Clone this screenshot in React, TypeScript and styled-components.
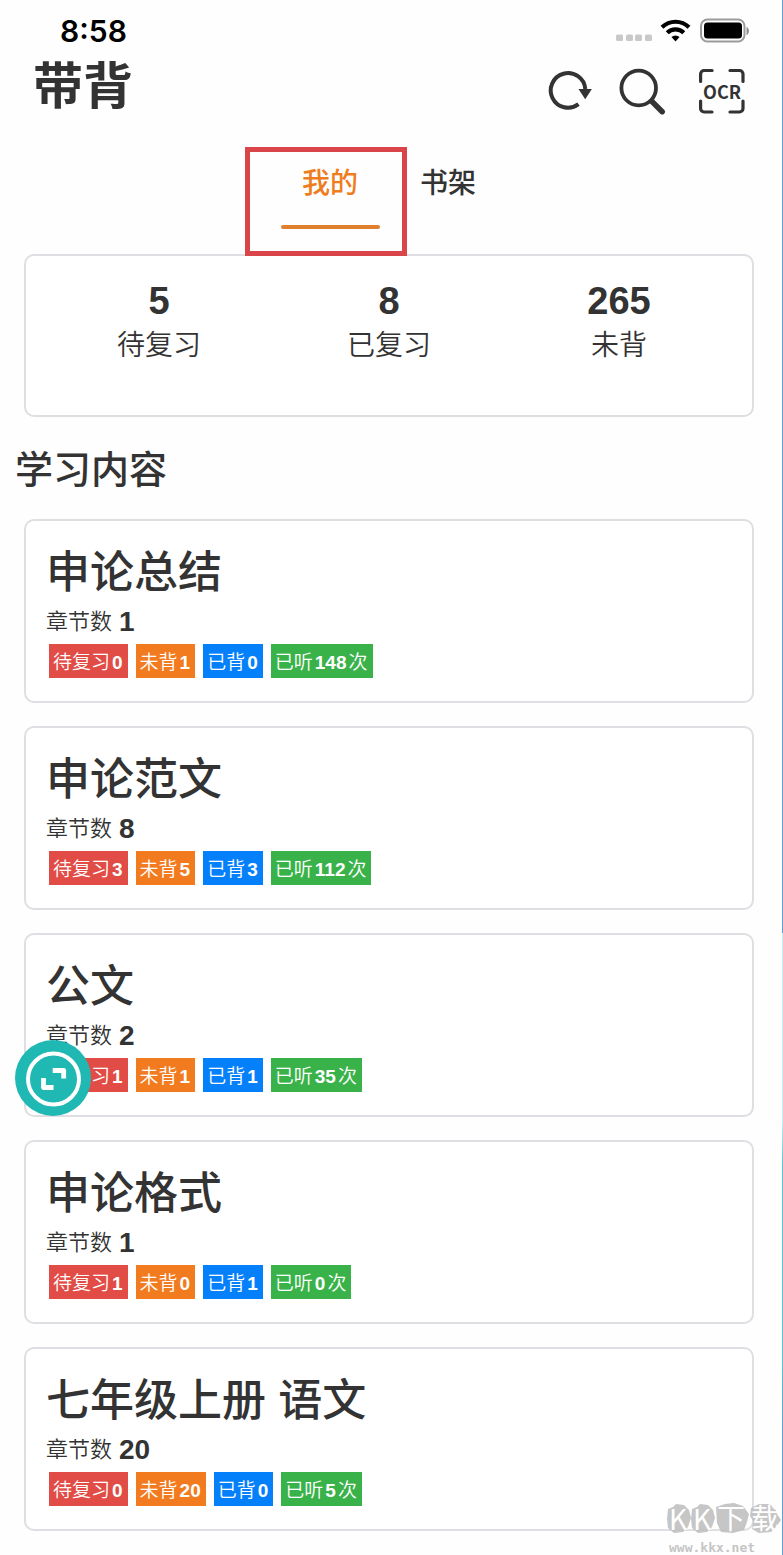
import React from "react";
import styled, { createGlobalStyle } from "styled-components";

const GlobalStyle = createGlobalStyle`
  * { box-sizing: border-box; }
  body {
    margin: 0;
    background: #fefefe;
    color: #333;
    font-family: "Liberation Sans", "Noto Sans CJK SC", sans-serif;
  }
  h1, h2, h3, p, dl, dd, dt, ul { margin: 0; padding: 0; font-weight: inherit; }
  button { border: 0; padding: 0; background: none; color: inherit; font: inherit; cursor: pointer; }
`;

const Page = styled.div`
  position: relative;
  min-height: 100vh;
  padding: 0 1px 24px 0;
  background: linear-gradient(#5f9fd0 60%, #c4f0f6 60%, #c4f0f6 72%, #55c3d0 75%, #55c3d0 88%, #5f9fd0 92%)
    right / 1px 100% no-repeat;
`;

const StatusBar = styled.div`
  display: flex;
  align-items: center;
  justify-content: space-between;
  height: 62px;
  padding: 0 31px 0 60px;
  color: #000;
`;

const Clock = styled.span`
  font: 600 30px/62px Inter, sans-serif;
`;

const Header = styled.header`
  display: flex;
  justify-content: space-between;
  height: 64px;
  padding: 0 36px 0 33px;
`;

const AppTitle = styled.h1`
  font-size: 50px;
  line-height: 50px;
  font-weight: 700;
`;

const Actions = styled.div`
  display: flex;
  gap: 30px;
  padding-top: 6px;
`;

const IconButton = styled.button`
  height: 48px;
  svg { display: block; overflow: visible; }
`;

const Content = styled.main`
  padding: 0 28px 0 24px;
`;

const Tabs = styled.nav`
  display: flex;
  justify-content: center;
  padding-top: 36px;
  margin-bottom: 25px;
`;

const Tab = styled.button<{ $active?: boolean }>`
  position: relative;
  display: flex;
  flex-direction: column;
  align-items: center;
  gap: 20px;
  width: 118px;
  font-size: 28px;
  line-height: 43px;
  font-weight: 500;
  color: ${(p) => (p.$active ? "#ee7d20" : "#333")};
  &::after {
    content: "";
    width: 99px;
    height: 4px;
    border-radius: 2px;
    background: ${(p) => (p.$active ? "#e07f2e" : "transparent")};
  }
`;

const Highlight = styled.span`
  position: absolute;
  top: -15px;
  left: -26px;
  width: 162px;
  height: 109px;
  border: 5px solid #d94548;
`;

const Panel = styled.section`
  border: 2px solid #dfdfe3;
  border-radius: 10px;
  background: #fff;
`;

const Stats = styled(Panel)`
  height: 163px;
  padding: 22px 18px 0;
`;

const StatList = styled.dl`
  display: grid;
  grid-template-columns: repeat(3, 1fr);
  text-align: center;
`;

const Stat = styled.div`
  display: flex;
  flex-direction: column-reverse;
`;

const StatLabel = styled.dt`
  font-size: 28px;
  line-height: 44px;
  font-weight: 350;
`;

const StatValue = styled.dd`
  font-size: 38px;
  line-height: 46px;
  font-weight: 700;
`;

const SectionTitle = styled.h2`
  margin: 25px 0 21px -9px;
  font-size: 38px;
  line-height: 56px;
  font-weight: 500;
`;

const Books = styled.ul`
  display: flex;
  flex-direction: column;
  gap: 23px;
  list-style: none;
`;

const Book = styled(Panel).attrs({ as: "li" })`
  height: 184px;
  padding: 20px;
`;

const BookTitle = styled.h3`
  font-size: 44px;
  line-height: 63px;
  font-weight: 500;
`;

const Chapters = styled.p`
  display: flex;
  align-items: center;
  gap: 7px;
  height: 36px;
  font-size: 22px;
  line-height: 34px;
  font-weight: 350;
  strong { font-size: 28px; font-weight: 700; }
`;

const Tags = styled.div`
  display: flex;
  gap: 8px;
  padding: 4px 0 0 3px;
`;

const tones = {
  red: "#e14d46",
  orange: "#f27b1f",
  blue: "#0580fb",
  green: "#3ab24a",
};

const Tag = styled.span<{ $tone: keyof typeof tones }>`
  display: flex;
  gap: 2px;
  height: 34px;
  padding: 0 5px 0 4px;
  background: ${(p) => tones[p.$tone]};
  color: #fff;
  font-size: 19px;
  line-height: 37px;
  font-weight: 350;
  strong { font-weight: 700; }
`;

const FloatButton = styled.button`
  position: absolute;
  top: 1040px;
  left: 15px;
  width: 76px;
  height: 76px;
  svg { display: block; }
`;

const Watermark = styled.div`
  position: absolute;
  right: 0;
  bottom: 0;
  width: 116px;
  opacity: 0.9;
  svg { display: block; overflow: visible; }
`;

const books = [
  { title: "申论总结", chapters: 1, review: 0, fresh: 1, done: 0, heard: 148 },
  { title: "申论范文", chapters: 8, review: 3, fresh: 5, done: 3, heard: 112 },
  { title: "公文", chapters: 2, review: 1, fresh: 1, done: 1, heard: 35 },
  { title: "申论格式", chapters: 1, review: 1, fresh: 0, done: 1, heard: 0 },
  { title: "七年级上册 语文", chapters: 20, review: 0, fresh: 20, done: 0, heard: 5 },
];

const stats = [
  { label: "待复习", value: 5 },
  { label: "已复习", value: 8 },
  { label: "未背", value: 265 },
];

const StatusIcons = () => (
  <svg width="136" height="28" viewBox="0 0 136 28" aria-hidden="true">
    {[1, 11, 20, 30].map((x) => (
      <rect key={x} x={x} y="17.5" width="7" height="6.5" rx="1.5" fill="#c9c9c9" />
    ))}
    <g fill="none" stroke="#000" strokeWidth="4.2">
      <path d="M47 10.200a19.500 19.500 0 0 1 27 0" />
      <path d="M52.200 15.700a12 12 0 0 1 16.600 0" />
    </g>
    <path d="M60.500 24.500l-4-4.400a5.800 5.800 0 0 1 8 0z" />
    <rect x="86" y="2.500" width="43.500" height="22" rx="6.500" fill="none" stroke="#9b9b9b" strokeWidth="2" />
    <rect x="89" y="5.500" width="38" height="16" rx="3.500" />
    <path d="M132 10.500a5 5 0 0 1 0 7z" fill="#8f8f8f" stroke="#8f8f8f" />
  </svg>
);

const RefreshIcon = () => (
  <svg width="42" height="46" viewBox="0 0 42 46" fill="none" aria-hidden="true">
    <path d="M30.500 35.200A17.300 17.300 0 1 1 37.300 20" stroke="#333" strokeWidth="4" />
    <path d="M30.500 20h13.400l-6.700 10.200z" fill="#333" />
  </svg>
);

const SearchIcon = () => (
  <svg width="48" height="48" viewBox="0 0 48 48" fill="none" stroke="#333" aria-hidden="true">
    <circle cx="18.700" cy="20" r="17.300" strokeWidth="3.800" />
    <path d="M32 33.500L42.200 43.700" strokeWidth="5.500" strokeLinecap="round" />
  </svg>
);

const OcrIcon = () => (
  <svg width="48" height="48" viewBox="0 0 48 48" aria-hidden="true">
    <path
      d="M2.600 13.500V6a3.500 3.500 0 0 1 3.500-3.500h8M32 2.500h9.500A3.500 3.500 0 0 1 45 6v7.500M45 33v7.500a3.500 3.500 0 0 1-3.500 3.500H32M14 44H6.100a3.500 3.500 0 0 1-3.500-3.500V33"
      fill="none"
      stroke="#333"
      strokeWidth="3.200"
      strokeLinecap="round"
    />
    <text x="24" y="30.500" textAnchor="middle" fill="#333" fontFamily="Noto Sans CJK SC, sans-serif" fontWeight="700" fontSize="18">
      OCR
    </text>
  </svg>
);

export default function App() {
  return (
    <Page>
      <GlobalStyle />
      <StatusBar>
        <Clock>8:58</Clock>
        <StatusIcons />
      </StatusBar>
      <Header>
        <AppTitle>带背</AppTitle>
        <Actions>
          <IconButton aria-label="刷新"><RefreshIcon /></IconButton>
          <IconButton aria-label="搜索"><SearchIcon /></IconButton>
          <IconButton aria-label="OCR"><OcrIcon /></IconButton>
        </Actions>
      </Header>
      <Content>
        <Tabs>
          <Tab $active>我的<Highlight /></Tab>
          <Tab>书架</Tab>
        </Tabs>
        <Stats>
          <StatList>
            {stats.map((s) => (
              <Stat key={s.label}>
                <StatLabel>{s.label}</StatLabel>
                <StatValue>{s.value}</StatValue>
              </Stat>
            ))}
          </StatList>
        </Stats>
        <SectionTitle>学习内容</SectionTitle>
        <Books>
          {books.map((b) => (
            <Book key={b.title}>
              <BookTitle>{b.title}</BookTitle>
              <Chapters>章节数<strong>{b.chapters}</strong></Chapters>
              <Tags>
                <Tag $tone="red">待复习<strong>{b.review}</strong></Tag>
                <Tag $tone="orange">未背<strong>{b.fresh}</strong></Tag>
                <Tag $tone="blue">已背<strong>{b.done}</strong></Tag>
                <Tag $tone="green">已听<strong>{b.heard}</strong>次</Tag>
              </Tags>
            </Book>
          ))}
        </Books>
      </Content>
      <FloatButton aria-label="展开">
        <svg width="76" height="76" viewBox="0 0 76 76" fill="none" aria-hidden="true">
          <circle cx="38" cy="38" r="38" fill="#20b8b3" />
          <circle cx="38.500" cy="39" r="25.500" stroke="#fff" strokeWidth="4" />
          <path d="M37.700 30.500h11V38.500M28.500 38V47.500H38.500" stroke="#fff" strokeWidth="4.800" strokeLinejoin="round" />
        </svg>
      </FloatButton>
      <Watermark>
        <svg width="116" height="56" viewBox="0 0 116 56" aria-hidden="true">
          <g fill="#c0c0c0">
            <path d="M1 10l5-2 3-3 8 1 5 5 2 8-3 9-5 5-9 1-6-5-1-9z" />
            <path d="M25 10l5-2 3-3 8 1 5 5 2 8-3 9-5 5-9 1-6-5-1-9z" />
            <path d="M49 8l9-3 9-1 9 3 6 8-2 8-3 8-11 3-12-1-4-9z" />
            <path d="M84 9l8-4 9 0 7 3 2 7 4 6-5 7-5 5-12 1-7-4 1-8-3-5z" />
          </g>
          <g fill="#fff" fontFamily="Noto Sans CJK SC, sans-serif" fontSize="28">
            <text x="2" y="31">K</text>
            <text x="26" y="31">K</text>
            <text x="50" y="30">下</text>
            <text x="84" y="30">载</text>
          </g>
          <text x="2" y="53" fill="#c0c0c0" fontFamily="DejaVu Sans Mono, monospace" fontWeight="700" fontSize="13">
            www.kkx.net
          </text>
        </svg>
      </Watermark>
    </Page>
  );
}
